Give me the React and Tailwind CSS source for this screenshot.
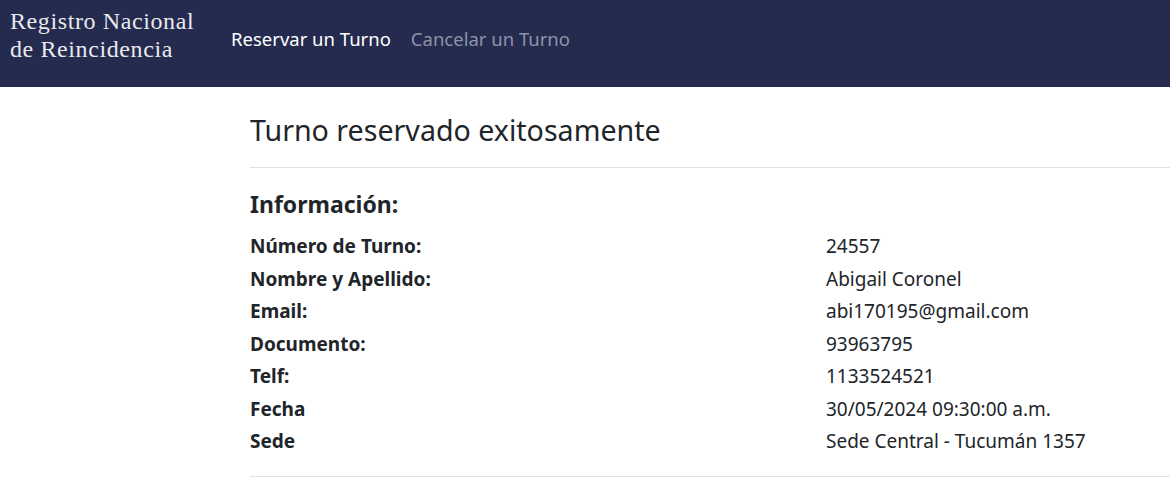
export default function App() {
  const rows = [
    ["Número de Turno:", "24557"],
    ["Nombre y Apellido:", "Abigail Coronel"],
    ["Email:", "abi170195@gmail.com"],
    ["Documento:", "93963795"],
    ["Telf:", "1133524521"],
    ["Fecha", "30/05/2024 09:30:00 a.m."],
    ["Sede", "Sede Central - Tucumán 1357"],
  ];

  return (
    <div className="min-h-[493px] bg-white text-[#212529] font-['Noto_Sans',sans-serif]">
      <nav className="flex h-[87px] items-start bg-[#242b4f] pl-[10px]">
        <div className="mt-[7px] w-[200px] font-['Liberation_Serif',serif] text-[24px] leading-[28px] tracking-[0.6px] text-[#e9e9ee]">
          Registro Nacional
          <br />
          de Reincidencia
        </div>
        <div className="mt-[25px] ml-[21px] flex gap-5 text-[18.5px]">
          <a className="text-white">Reservar un Turno</a>
          <a className="text-[#8e93a8]">Cancelar un Turno</a>
        </div>
      </nav>

      <main className="pl-[250px]">
        <h1 className="pt-[24px] pb-[18px] text-[28.6px] leading-[38px]">Turno reservado exitosamente</h1>
        <hr className="border-t border-[#dee2e6]" />
        <h2 className="mt-[21px] mb-[11px] text-[23px] font-bold leading-[30px]">Información:</h2>
        <div className="grid grid-cols-[576px_1fr] text-[19px] leading-[32.5px]">
          {rows.map(([k, v]) => (
            <div key={k} className="contents">
              <div className="font-bold">{k}</div>
              <div>{v}</div>
            </div>
          ))}
        </div>
        <hr className="mt-[18px] border-t border-[#dee2e6]" />
      </main>
    </div>
  );
}
